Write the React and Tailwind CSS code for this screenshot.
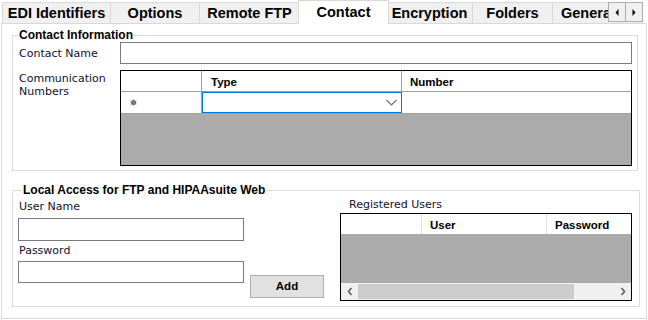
import React from "react";

function Tab({ label, w, selected }) {
  if (selected) {
    return (
      <div
        className={`relative z-20 -mx-[2px] -mb-px h-[24px] shrink-0 border-x border-t border-[#d9d9d9] bg-white pt-[3px] text-center font-['Liberation_Sans',sans-serif] text-[14.5px] font-bold leading-[17px] text-black`}
        style={{ width: w + 4 }}
      >
        {label}
      </div>
    );
  }
  return (
    <div
      className="h-[21px] shrink-0 border-r border-t border-[#d9d9d9] bg-[#f0f0f0] pt-[2px] text-center font-['Liberation_Sans',sans-serif] text-[14.5px] font-bold leading-[17px] text-black whitespace-nowrap overflow-hidden"
      style={{ width: w }}
    >
      {label}
    </div>
  );
}

function Chevron({ dir }) {
  return (
    <svg width="6" height="9" viewBox="0 0 6 9">
      {dir === "left" ? (
        <path d="M4.5 1 L1.5 4.5 L4.5 8" stroke="#606060" strokeWidth="1.6" fill="none" />
      ) : (
        <path d="M1.5 1 L4.5 4.5 L1.5 8" stroke="#606060" strokeWidth="1.6" fill="none" />
      )}
    </svg>
  );
}

export default function App() {
  return (
    <div className="relative h-[320px] w-[648px] overflow-hidden bg-white font-['DejaVu_Sans',sans-serif] text-[11px] text-[#14102a]">
      {/* tab strip */}
      <div className="relative z-10 flex h-[23px] items-end pl-[2px]">
        <div className="flex items-end border-l border-[#d9d9d9]">
          <Tab label="EDI Identifiers" w={108} />
        </div>
        <Tab label="Options" w={89} />
        <Tab label="Remote FTP" w={100} />
        <Tab label="Contact" w={87} selected />
        <Tab label="Encryption" w={86} />
        <Tab label="Folders" w={80} />
        <div className="h-[21px] w-[90px] shrink-0 overflow-hidden whitespace-nowrap border-r border-t border-[#d9d9d9] bg-[#f0f0f0] pl-[8px] pt-[2px] font-['Liberation_Sans',sans-serif] text-[14.5px] font-bold leading-[17px] text-black">
          General
        </div>
        {/* scroll buttons */}
        <div className="absolute left-[608px] top-[2px] z-30 flex">
          <div className="flex h-[20px] w-[18px] items-center justify-center border border-[#adadad] bg-[#f0f0f0]">
            <svg width="4" height="7" viewBox="0 0 4 7">
              <path d="M3.5 0 L0.5 3.5 L3.5 7 Z" fill="#000" />
            </svg>
          </div>
          <div className="-ml-px flex h-[20px] w-[18px] items-center justify-center border border-[#adadad] bg-[#f0f0f0]">
            <svg width="4" height="7" viewBox="0 0 4 7">
              <path d="M0.5 0 L3.5 3.5 L0.5 7 Z" fill="#000" />
            </svg>
          </div>
        </div>
      </div>

      {/* page panel */}
      <div className="ml-[1px] h-[296px] w-[646px] border border-[#d9d9d9] bg-white pl-[10px] pt-[11px]">
        {/* Contact Information group */}
        <div className="relative h-[136px] w-[626px] border border-[#dcdcdc] pl-[6px] pt-[6px]">
          <span className="absolute -top-[8px] left-[5px] bg-white px-[1px] font-['Liberation_Sans',sans-serif] text-[12px] font-bold leading-[14px] text-black">
            Contact Information
          </span>
          <div className="flex items-center">
            <div className="w-[101px] pt-[1px] leading-[13px]">Contact Name</div>
            <div className="h-[22px] w-[512px] border border-[#7a7a7a] bg-white" />
          </div>
          <div className="mt-[6px] flex">
            <div className="w-[101px] pt-[2px] leading-[13px]">
              Communication
              <br />
              Numbers
            </div>
            <div className="flex h-[96px] w-[512px] flex-col border border-black bg-[#ababab]">
              <div className="flex h-[21px] border-b border-[#a0a0a0] bg-white font-['Liberation_Sans',sans-serif] text-[11.5px] font-bold text-black">
                <div className="w-[81px] border-r border-[#a0a0a0]" />
                <div className="w-[200px] border-r border-[#a0a0a0] pl-[9px] pt-[3px]">Type</div>
                <div className="flex-1 pl-[8px] pt-[3px]">Number</div>
              </div>
              <div className="flex h-[22px] border-b border-[#a0a0a0] bg-white">
                <div className="flex w-[81px] items-center border-r border-[#a0a0a0] pl-[9px]">
                  <svg width="7" height="7" viewBox="0 0 7 7">
                    <circle cx="3.5" cy="3.5" r="2.6" fill="#6a6a6a" />
                    <path d="M3.5 0.3 V6.7 M0.5 2 L6.5 5 M0.5 5 L6.5 2" stroke="#808080" strokeWidth="0.9" />
                  </svg>
                </div>
                <div className="flex w-[200px] items-center justify-end border border-[#0078d7] pr-[4px]">
                  <svg width="11" height="7" viewBox="0 0 11 7">
                    <path d="M0.5 1 L5.5 6 L10.5 1" stroke="#6d6d6d" strokeWidth="1.1" fill="none" />
                  </svg>
                </div>
                <div className="flex-1" />
              </div>
            </div>
          </div>
        </div>

        {/* Local Access group */}
        <div className="relative mt-[19px] flex h-[117px] w-[628px] border border-[#dcdcdc] pl-[5px]">
          <span className="absolute -top-[8px] left-[9px] bg-white px-[1px] font-['Liberation_Sans',sans-serif] text-[12px] font-bold leading-[14px] text-black">
            Local Access for FTP and HIPAAsuite Web
          </span>
          <div className="flex w-[226px] flex-col pt-[9px]">
            <div className="pl-[1px] leading-[13px]">User Name</div>
            <div className="mt-[5px] h-[23px] w-[226px] border border-[#7a7a7a] bg-white" />
            <div className="mt-[3px] pl-[1px] leading-[13px]">Password</div>
            <div className="mt-[4px] h-[22px] w-[226px] border border-[#7a7a7a] bg-white" />
          </div>
          <div className="ml-[6px] pt-[84px]">
            <div className="flex h-[23px] w-[74px] items-center justify-center border border-[#adadad] bg-[#e1e1e1] font-['Liberation_Sans',sans-serif] text-[11.5px] font-bold text-black">
              Add
            </div>
          </div>
          <div className="ml-[16px] flex flex-col pt-[7px]">
            <div className="pl-[9px] leading-[13px]">Registered Users</div>
            <div className="mt-[2px] flex h-[88px] w-[292px] flex-col border border-black bg-[#ababab]">
              <div className="flex h-[20px] bg-white font-['Liberation_Sans',sans-serif] text-[11.5px] font-bold text-black">
                <div className="w-[81px] border-r border-[#e0e0e0]" />
                <div className="w-[125px] border-r border-[#e0e0e0] pl-[8px] pt-[3px]">User</div>
                <div className="flex-1 pl-[8px] pt-[3px]">Password</div>
              </div>
              <div className="flex-1" />
              <div className="flex h-[17px] items-center bg-[#f0f0f0]">
                <div className="flex w-[17px] items-center justify-center">
                  <Chevron dir="left" />
                </div>
                <div className="h-[15px] w-[216px] bg-[#cdcdcd]" />
                <div className="flex-1" />
                <div className="flex w-[17px] items-center justify-center">
                  <Chevron dir="right" />
                </div>
              </div>
            </div>
          </div>
        </div>
      </div>
    </div>
  );
}
